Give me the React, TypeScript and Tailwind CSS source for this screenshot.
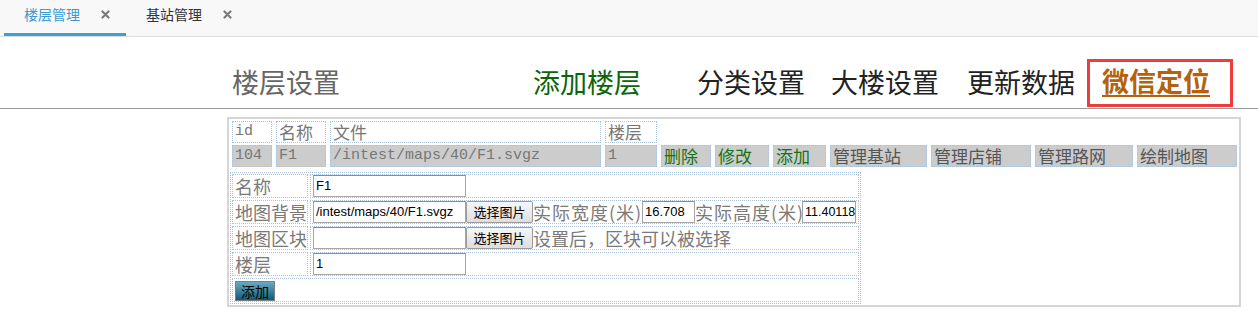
import React from "react";

const cjk = "font-['Noto_Sans_CJK_SC','Noto_Sans',sans-serif]";
const mono = "font-['Liberation_Mono','Noto_Sans_CJK_SC',monospace]";
const arial = "font-['Liberation_Sans','Noto_Sans_CJK_SC',sans-serif]";

function TabClose() {
  return (
    <svg width="9" height="9" viewBox="0 0 9 9" className="shrink-0">
      <path
        d="M1.5 1.5L7.5 7.5M7.5 1.5L1.5 7.5"
        stroke="#7a7a7a"
        strokeWidth="2.2"
        strokeLinecap="round"
      />
    </svg>
  );
}

const headCells = [
  { w: "w-[40px]", text: "id", ascii: true },
  { w: "w-[50px]", text: "名称" },
  { w: "w-[271px]", text: "文件" },
  { w: "w-[52px]", text: "楼层" },
];

const rowCells = [
  { w: "w-[40px]", text: "104", ascii: true, color: "text-[#777]" },
  { w: "w-[50px]", text: "F1", ascii: true, color: "text-[#777]" },
  { w: "w-[271px]", text: "/intest/maps/40/F1.svgz", ascii: true, color: "text-[#777]" },
  { w: "w-[52px]", text: "1", ascii: true, color: "text-[#777]" },
  { w: "w-[50px]", text: "删除", color: "text-[#137513]" },
  { w: "w-[54px]", text: "修改", color: "text-[#137513]" },
  { w: "w-[53px]", text: "添加", color: "text-[#137513]" },
  { w: "w-[97px]", text: "管理基站", color: "text-[#555]" },
  { w: "w-[100px]", text: "管理店铺", color: "text-[#555]" },
  { w: "w-[98px]", text: "管理路网", color: "text-[#555]" },
  { w: "w-[100px]", text: "绘制地图", color: "text-[#555]" },
];

function Cell({ item, gray }: any) {
  return (
    <div
      className={`${item.w} h-[22px] shrink-0 border border-dotted border-[#a9c2da] pl-[2px] whitespace-nowrap ${
        gray ? "bg-[#cccccc]" : "bg-white"
      } ${
        item.ascii
          ? `${mono} text-[15px] leading-[20px]`
          : `${cjk} text-[17px] leading-[20px]`
      } ${item.color || "text-[#777]"}`}
    >
      {item.text}
    </div>
  );
}

function TextBox({ value, w = "w-[153px]", small }: any) {
  return (
    <div
      className={`${w} h-[22px] shrink-0 border border-[#a6a6a6] border-t-[#8c8c8c] bg-white px-[2px] ${arial} ${
        small ? "text-[12.5px]" : "text-[13px]"
      } leading-[20px] text-black whitespace-nowrap`}
    >
      {value}
    </div>
  );
}

function PickButton() {
  return (
    <div
      className={`w-[67px] h-[22px] shrink-0 rounded-[2px] border border-[#9a9a9a] bg-gradient-to-b from-[#f7f7f7] to-[#dedede] text-center ${cjk} text-[13px] leading-[20px] text-black`}
    >
      选择图片
    </div>
  );
}

function FormRow({ label, children }: any) {
  return (
    <div className="flex gap-[2px]">
      <div
        className={`w-[76px] h-[24px] border border-dotted border-[#a9c2da] pl-[2px] ${cjk} text-[18px] leading-[22px] text-[#7a7a7a] whitespace-nowrap`}
      >
        {label}
      </div>
      <div className="w-[549px] h-[24px] border border-dotted border-[#a9c2da] pl-[2px] flex items-center">
        {children}
      </div>
    </div>
  );
}

const lbl = `${cjk} text-[18px] leading-[22px] text-[#7a7a7a] whitespace-nowrap`;

export default function App() {
  return (
    <div className={`w-[1258px] h-[318px] bg-white overflow-hidden ${cjk}`}>
      {/* tabs */}
      <div className="flex h-[37px] bg-[#f8f8f8] border-b border-[#dedede] pl-[4px]">
        <div className="w-[122px] h-[36px] pl-[20px] pt-[5px] border-b-[3px] border-[#3c9fd6]">
          <div className="flex items-center h-[18px]">
            <span className="text-[14px] leading-[18px] text-[#3a9bd5]">楼层管理</span>
            <span className="ml-[21px] flex">
              <TabClose />
            </span>
          </div>
        </div>
        <div className="w-[122px] h-[36px] pl-[20px] pt-[5px]">
          <div className="flex items-center h-[18px]">
            <span className="text-[14px] leading-[18px] text-[#333]">基站管理</span>
            <span className="ml-[21px] flex">
              <TabClose />
            </span>
          </div>
        </div>
      </div>

      {/* header */}
      <div className="flex items-end h-[72px] border-b border-[#9a9a9a] pl-[232px]">
        <span className="h-[48px] leading-[44px] text-[27px] text-[#666] whitespace-nowrap">
          楼层设置
        </span>
        <span className="ml-[193px] h-[48px] leading-[44px] text-[27px] text-[#0b650b] whitespace-nowrap">
          添加楼层
        </span>
        <span className="ml-[56px] h-[48px] leading-[44px] text-[27px] text-[#222] whitespace-nowrap">
          分类设置
        </span>
        <span className="ml-[26px] h-[48px] leading-[44px] text-[27px] text-[#222] whitespace-nowrap">
          大楼设置
        </span>
        <span className="ml-[28px] h-[48px] leading-[44px] text-[27px] text-[#222] whitespace-nowrap">
          更新数据
        </span>
        <div className="ml-[12px] mb-[1px] h-[48px] w-[146px] border-[3px] border-[#f03c3c] pl-[12px]">
          <span className="block leading-[38px] text-[27px] font-bold text-[#b5620b] underline underline-offset-[3px] decoration-[2px] whitespace-nowrap">
            微信定位
          </span>
        </div>
      </div>

      {/* content */}
      <div className="ml-[227px] mt-[8px] w-[1014px] border-2 border-[#d5d5d5] pl-[1px] pt-[2px] pb-[1px]">
        <div className="ml-[2px] flex flex-col gap-[2px]">
          <div className="flex gap-[4px]">
            {headCells.map((c) => (
              <Cell key={c.text} item={c} />
            ))}
          </div>
          <div className="flex gap-[4px]">
            {rowCells.map((c) => (
              <Cell key={c.text} item={c} gray />
            ))}
          </div>
        </div>

        <div className="mt-[5px] w-[631px] border border-dotted border-[#a9c2da] p-[1px] flex flex-col gap-[2px]">
          <FormRow label="名称">
            <TextBox value="F1" />
          </FormRow>
          <FormRow label="地图背景">
            <TextBox value="/intest/maps/40/F1.svgz" />
            <PickButton />
            <span className={`${lbl} w-[108px] shrink-0 tracking-[1px]`}>实际宽度(米)</span>
            <span className="ml-[1px] flex">
              <TextBox value="16.708" w="w-[53px]" />
            </span>
            <span className={`${lbl} w-[107px] shrink-0 tracking-[1px]`}>实际高度(米)</span>
            <span className="flex">
              <TextBox value="11.40118" w="w-[54px]" small />
            </span>
          </FormRow>
          <FormRow label="地图区块">
            <TextBox value="" />
            <PickButton />
            <span className={lbl}>设置后，区块可以被选择</span>
          </FormRow>
          <FormRow label="楼层">
            <TextBox value="1" />
          </FormRow>
          <div className="w-[627px] h-[24px] border border-dotted border-[#a9c2da] pl-[2px] pt-[2px]">
            <div className="w-[40px] h-[20px] border border-[#7d7d7d] bg-gradient-to-b from-[#6aaac1] to-[#0b5b7b] text-center text-[14px] leading-[18px] text-black">
              添加
            </div>
          </div>
        </div>
      </div>
    </div>
  );
}
